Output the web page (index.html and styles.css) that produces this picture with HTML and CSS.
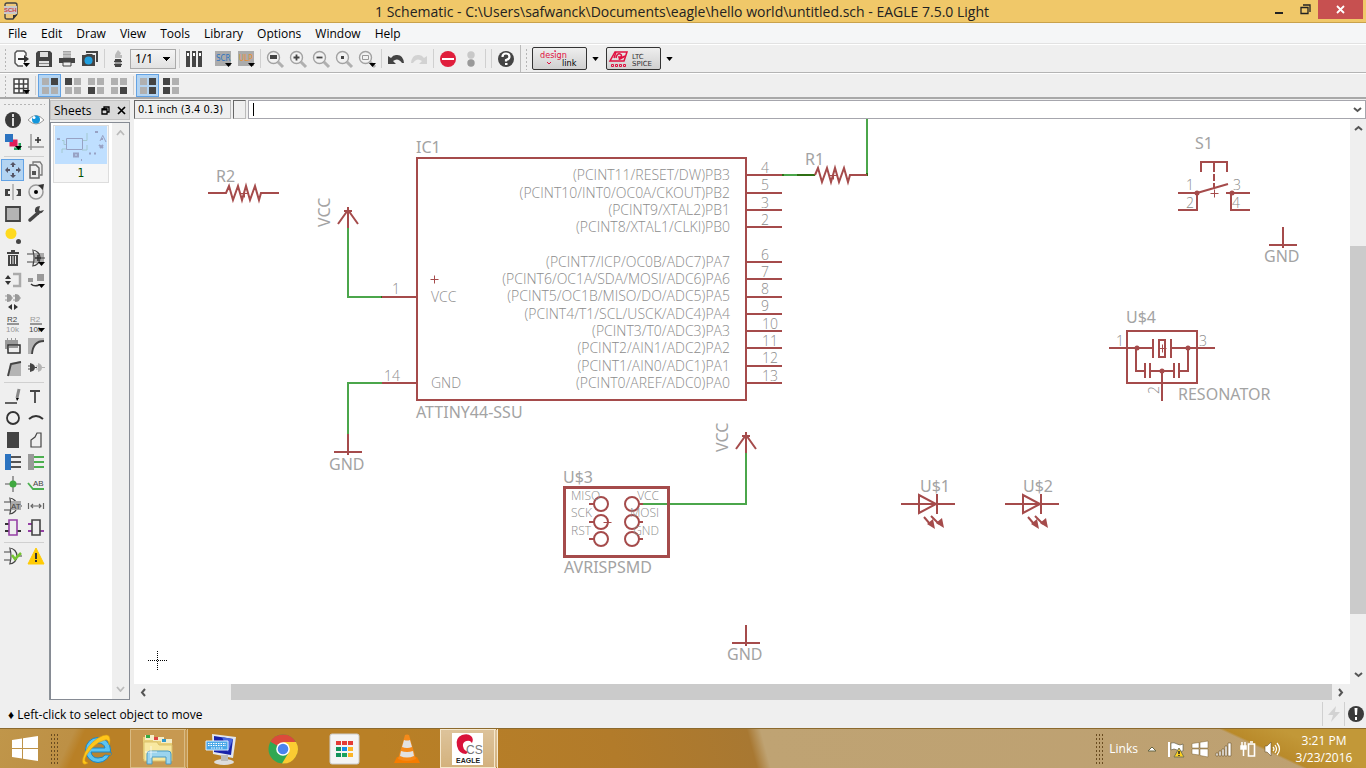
FILE: index.html
```html
<!DOCTYPE html>
<html lang="en">
<head>
<meta charset="utf-8">
<title>1 Schematic - EAGLE 7.5.0 Light</title>
<link rel="stylesheet" href="styles.css">
</head>
<body>
<svg class="defs" aria-hidden="true">
  <defs>
    <symbol id="drop" viewBox="0 0 8 5"><path d="M0 0h8L4 5z"/></symbol>
    <g id="lens"><path d="M13 13l5 5" stroke="#b0b0b0" stroke-width="3"/><circle cx="8.500" cy="8.500" r="6" fill="#f2f2f2" stroke="#a2a2a2" stroke-width="1.400"/></g>
    <g id="gate" fill="none" stroke="#444" stroke-width="1.200"><path d="M6 2c5 0 8 4 8 8s-3 8-8 8M7 3q2 7 0 14M1 6h6M1 14h6M14 10h5"/></g>
    <path id="zig" d="M0 0H18L21-7L25 7L30-7L34 7L38-7L42 7L47-7L51 7L53 0H71"/>
    <path id="plus" d="M-4 0H4M0-4V4"/>
    <g id="led"><path d="M0 0H54M18-9V9L35 0ZM36-10V10"/><path d="M23 13l6 7M30 12l8 8"/><path class="tip" d="M26 20l6-5 2 10zM35 19l6-5 2 10z"/></g>
    <path id="vcc" d="M0 19V0M-10 15L0 1L10 15M-4 2H4M0-2V4"/>
    <path id="gnd" d="M0 0V18M-14 18H14M0 18V21"/>
  </defs>
</svg>

<header class="titlebar">
  <svg class="app-icon" width="14" height="18" viewBox="0 0 14 18"><path d="M3 1h8q2 0 2 2v9l-4 5H3q-2 0-2-2V3q0-2 2-2z" fill="#eec87a" stroke="#444" stroke-width="1.4"/><path d="M9 17v-4h4z" fill="#333"/><path d="M0 4h13v8H0z" fill="#c9c9c9"/><text x="0" y="10" class="t-sch">SCH</text></svg>
  <h1>1 Schematic - C:\Users\safwanck\Documents\eagle\hello world\untitled.sch - EAGLE 7.5.0 Light</h1>
  <div class="winbtns">
    <button aria-label="Minimize"><svg width="10" height="10"><path d="M1 7h8v2H1z" fill="#222"/></svg></button>
    <button aria-label="Restore"><svg width="11" height="11"><path d="M1 3.500h7v6H1zM3 1h7v7" fill="none" stroke="#222" stroke-width="1.300"/></svg></button>
    <button class="close" aria-label="Close"><svg width="9" height="9"><path d="M1 1l7 7M8 1L1 8" stroke="#fff" stroke-width="1.800"/></svg></button>
  </div>
</header>

<nav class="menubar">
  <button>File</button><button>Edit</button><button>Draw</button><button>View</button><button>Tools</button><button>Library</button><button>Options</button><button>Window</button><button>Help</button>
</nav>

<div class="toolbar top">
  <span class="grip"></span>
  <button aria-label="Open"><svg width="20" height="20"><path d="M15 7V4L13 2H6L4 4v10l3 3h5" fill="#fafafa" stroke="#555" stroke-width="1.500"/><path d="M7 9h6V6l5 4-5 4v-3H7z" fill="#333"/><path d="M12 14h7l-3.500 4z"/></svg></button>
  <button aria-label="Save"><svg width="20" height="20"><path d="M2 4l2-2h12l2 2v14H2z" fill="#444"/><path d="M6 3h8v5H6zM5 12h10v5H5z" fill="#e0e0e0"/><path d="M5 14h10v1H5z" fill="#888"/></svg></button>
  <button aria-label="Print"><svg width="20" height="20"><path d="M6 2h8v7H6z" fill="#a5a5a5"/><path d="M6 4h8M6 7h8" stroke="#ddd"/><path d="M2 9h16v5H2z" fill="#444"/><path d="M6 13h8v4H6z" fill="#eee" stroke="#444"/></svg></button>
  <button aria-label="Image export"><svg width="20" height="20"><path d="M6 3h11v10" fill="none" stroke="#444" stroke-width="2"/><path d="M2 6h3l2-1h5l1 1h2v11H2z" fill="#444"/><circle cx="8.500" cy="11.500" r="4" fill="#20a0e0"/></svg></button>
  <span class="sep"></span>
  <button aria-label="Board"><svg width="20" height="20"><path d="M9 1l3 3-1 2h2v3H6V6l1-2z" fill="#bbb"/><path d="M6 10h6v8H6z" fill="#444"/><path d="M5 12.500h8M5 15.500h8" stroke="#444" stroke-width="1.500"/><path d="M5 14h9" stroke="#eee"/></svg></button>
  <select class="page" aria-label="Sheet"><option>1/1</option></select>
  <span class="sep"></span>
  <button aria-label="Use library"><svg width="20" height="20"><path d="M2 2h4v16H2zM8 2h4v16H8zM14 2h4v16h-4z" fill="#444"/><path d="M3 4h2v3H3zM9 4h2v3H9zM15 4h2v3h-2z" fill="#fff"/></svg></button>
  <span class="space"></span>
  <button aria-label="Script"><svg width="20" height="20"><path d="M2 2h16v15H2z" fill="#ababab"/><text x="3" y="12" class="t-scr blue">SCR</text><path d="M12 14h7l-3.500 4z"/></svg></button>
  <button aria-label="Run ULP"><svg width="20" height="20"><path d="M2 2h16v15H2z" fill="#ababab"/><text x="3" y="12" class="t-scr orange">ULP</text><path d="M12 14h7l-3.500 4z"/></svg></button>
  <span class="sep"></span>
  <button aria-label="Zoom fit"><svg width="20" height="20"><use href="#lens"/><path d="M5 6h7v4H5z" fill="#444"/></svg></button>
  <button aria-label="Zoom in"><svg width="20" height="20"><use href="#lens"/><path d="M5.500 8.500h6M8.500 5.500v6" stroke="#444" stroke-width="1.800"/></svg></button>
  <button aria-label="Zoom out"><svg width="20" height="20"><use href="#lens"/><path d="M5.500 8.500h6" stroke="#444" stroke-width="1.800"/></svg></button>
  <button aria-label="Redraw"><svg width="20" height="20"><use href="#lens"/><path d="M7 7h3v3H7z" fill="#444"/></svg></button>
  <button aria-label="Zoom select"><svg width="20" height="20"><use href="#lens"/><path d="M5.500 6.500h6v4h-6z" fill="none" stroke="#999"/><path d="M12 14h7l-3.500 4z"/></svg></button>
  <span class="sep"></span>
  <button aria-label="Undo"><svg width="20" height="20"><path d="M2 7v8h8l-3-3q5-4 9 2h2q-1-9-8-8-3 0-5 3z" fill="#444"/></svg></button>
  <button aria-label="Redo"><svg width="20" height="20"><path d="M18 7v8h-8l3-3q-5-4-9 2H2q1-9 8-8 3 0 5 3z" fill="#d2d2d2"/></svg></button>
  <span class="sep"></span>
  <button aria-label="Stop"><svg width="20" height="20"><circle cx="10" cy="10" r="8" fill="#e01e3c"/><path d="M4 9h12v2H4z" fill="#fff"/></svg></button>
  <button aria-label="Go"><svg width="20" height="20"><circle cx="10" cy="6" r="3.700" fill="#c8c8c8"/><circle cx="10" cy="14" r="3.700" fill="#999"/></svg></button>
  <span class="sep"></span><span class="sep"></span>
  <button aria-label="Help"><svg width="20" height="20"><circle cx="10" cy="10" r="8" fill="#444"/><path d="M6.500 8q0-3.500 3.500-3.500T13.500 8q0 2-3.500 3v1.500" fill="none" stroke="#fff" stroke-width="2.200"/><path d="M9 14h2.500v2H9z" fill="#fff"/></svg></button>
  <span class="edge"></span><span class="grip"></span>
  <button class="brand" aria-label="design link"><svg width="52" height="20"><text x="6" y="9" class="t-design">design</text><text x="28" y="17" class="t-link">link</text><path d="M13 13l2 2 2-2M21 1v2" stroke="#e01040" fill="none"/></svg></button>
  <button class="mini" aria-label="design link menu"><svg width="7" height="4"><use href="#drop"/></svg></button>
  <button class="brand" aria-label="LTC SPICE"><svg width="52" height="20"><path d="M7 3h12l-3 9H2z" fill="none" stroke="#e01040" stroke-width="1.500"/><path d="M8 9q1-5 4-4t0 4 5-2M8 3L6 9M10 8h5" fill="none" stroke="#e01040" stroke-width="1.500"/><path d="M3.500 15.500h2v2h-2zM7.500 15.500h2v2h-2zM11.500 15.500h2v2h-2zM15.500 15.500h2v2h-2z" fill="none" stroke="#e01040"/><text x="24" y="10" class="t-ltc">LTC</text><text x="24" y="17" class="t-ltc">SPICE</text></svg></button>
  <button class="mini" aria-label="SPICE menu"><svg width="7" height="4"><use href="#drop"/></svg></button>
</div>

<div class="toolbar second">
  <span class="grip"></span>
  <button aria-label="Grid"><svg width="20" height="20"><path d="M3 3h14v14H3zM8 3v14M12.500 3v14M3 8h14M3 12.500h14" fill="#fff" stroke="#444" stroke-width="1.500"/><path d="M12 14h7l-3.500 4z"/></svg></button>
  <span class="sep"></span>
  <button class="on" aria-label="Layout 1"><svg width="20" height="20"><path d="M2 2h7v7H2zM2 11h7v7H2zM11 11h7v7h-7z" fill="#b0b0b0"/><path d="M11 2h7v7h-7z" fill="#444"/></svg></button>
  <button aria-label="Layout 2"><svg width="20" height="20"><path d="M11 2h7v7h-7zM2 11h7v7H2zM11 11h7v7h-7z" fill="#b0b0b0"/><path d="M2 2h7v7H2z" fill="#444"/></svg></button>
  <button aria-label="Layout 3"><svg width="20" height="20"><path d="M2 2h7v7H2zM11 2h7v7h-7zM11 11h7v7h-7z" fill="#b0b0b0"/><path d="M2 11h7v7H2z" fill="#444"/></svg></button>
  <button aria-label="Layout 4"><svg width="20" height="20"><path d="M2 2h7v7H2zM11 2h7v7h-7zM2 11h7v7H2z" fill="#b0b0b0"/><path d="M11 11h7v7h-7z" fill="#444"/></svg></button>
  <span class="sep"></span>
  <button class="on" aria-label="Layout 5"><svg width="20" height="20"><path d="M2 2h7v7H2zM2 11h7v7H2z" fill="#b0b0b0"/><path d="M11 2h7v7h-7zM11 11h7v7h-7z" fill="#444"/></svg></button>
  <button aria-label="Layout 6"><svg width="20" height="20"><path d="M11 2h7v7h-7zM11 11h7v7h-7z" fill="#b0b0b0"/><path d="M2 2h7v7H2zM2 11h7v7H2z" fill="#444"/></svg></button>
</div>

<main class="work">
  <aside class="toolbox">
    <span class="grip-h"></span>
    <button aria-label="Info"><svg width="20" height="20"><circle cx="10" cy="10" r="8" fill="#3a3a3a"/><path d="M9 4h2v3H9zM9 8h2v8H9z" fill="#ddd"/></svg></button>
    <button aria-label="Show"><svg width="20" height="20"><path d="M2 10q8-9 16 0-8 8-16 0z" fill="#fff" stroke="#999"/><circle cx="10" cy="9.500" r="4" fill="#1296db"/><circle cx="8" cy="7.500" r="1.500" fill="#fff"/></svg></button>
    <button aria-label="Layers"><svg width="20" height="20"><path d="M11 11h7v7h-7z" fill="#26a35e"/><path d="M6 7h9v8H6z" fill="#e01e5a" stroke="#eee"/><path d="M2 2h8v8H2z" fill="#2b73c0"/><path d="M12 14h7l-3.500 4z"/></svg></button>
    <button aria-label="Mark"><svg width="20" height="20"><path d="M5 2v16M2 15h16" stroke="#999" stroke-width="1.500"/><path d="M9 8h6M12 5v6" stroke="#333" stroke-width="1.600"/></svg></button>
    <span class="rule"></span>
    <button class="on" aria-label="Move"><svg width="20" height="20"><path d="M10 2l3 3h-2v2H9V5H7zM10 18l3-3h-2v-2H9v2H7zM2 10l3-3v2h2v2H5v2zM18 10l-3-3v2h-2v2h2v2z" fill="#556"/></svg></button>
    <button aria-label="Copy"><svg width="20" height="20"><path d="M7 4V2h7l2 3v10h-2" fill="#eee" stroke="#777" stroke-width="1.300"/><path d="M4 5h6l3 3v10H4z" fill="#eee" stroke="#666" stroke-width="1.500"/><path d="M6 11h4v4H6z" fill="#555"/></svg></button>
    <button aria-label="Mirror"><svg width="20" height="20"><path d="M10 2v16" stroke="#aaa" stroke-width="1.500"/><path d="M2 7h5v2H5v3h2v2H2zM18 7h-5l2 2v3l-2 2h5z" fill="#444"/></svg></button>
    <button aria-label="Rotate"><svg width="20" height="20"><circle cx="10" cy="10" r="7" fill="none" stroke="#999" stroke-width="1.500"/><circle cx="10" cy="10" r="2"/><path d="M12 3l6-1-1 6z" fill="#333"/></svg></button>
    <button aria-label="Group"><svg width="20" height="20"><path d="M3 3h14v14H3z" fill="#b4b4b4" stroke="#444" stroke-width="1.800"/></svg></button>
    <button aria-label="Change"><svg width="20" height="20"><path d="M4 16l8-7" stroke="#444" stroke-width="3.500" stroke-linecap="round"/><path d="M18 6l-4 1-1-1 1-4q-6 0-5 6 6 4 9-2z" fill="#444"/></svg></button>
    <button aria-label="Paste"><svg width="20" height="20"><circle cx="8" cy="7.500" r="5.500" fill="#ffda1f"/><circle cx="15.500" cy="15.500" r="2.500" fill="#444"/></svg></button>
    <span></span>
    <button aria-label="Delete"><svg width="20" height="20"><path d="M4 5h12M8 3h4" stroke="#444" stroke-width="1.800"/><path d="M5 7h10v11H5z" fill="#444"/><path d="M7.500 8v8M10 8v8M12.500 8v8" stroke="#eee"/></svg></button>
    <button aria-label="Add"><svg width="20" height="20"><path d="M8 5h10v10H8z" fill="#aaa"/><use href="#gate"/><path d="M9 10h6M12 7v6" stroke="#333" stroke-width="1.600"/><path d="M12 14h7l-3.500 4z"/></svg></button>
    <button aria-label="Pinswap"><svg width="20" height="20"><path d="M10 4h7v12h-7" fill="none" stroke="#aaa" stroke-width="2.500"/><path d="M5 5l3 4H2zM5 15l3-4H2z" fill="#333"/></svg></button>
    <button aria-label="Replace"><svg width="20" height="20"><path d="M2 8h5v4H2zM11 4h7v7h-7z" fill="#999"/><path d="M5 14q3 3 8 1" fill="none" stroke="#333" stroke-width="1.500"/><path d="M12 14h7l-3.500 4z"/></svg></button>
    <button aria-label="Gateswap"><svg width="20" height="20"><path d="M4 2q5 0 5 4t-5 4zM12 2q5 0 5 4t-5 4z" fill="#999"/><path d="M2 4h2M2 8h2M9 6h1M10 4h2M10 8h2M17 6h1" stroke="#999"/><path d="M9 12v6l-4-3zM11 12v6l4-3z" fill="#333"/></svg></button>
    <span></span>
    <button aria-label="Name"><svg width="20" height="20"><text x="4" y="8" class="t-tool">R2</text><path d="M4 10h12" stroke="#777" stroke-width="1.500"/><text x="3" y="18" class="t-tool faint">10k</text></svg></button>
    <button aria-label="Value"><svg width="20" height="20"><text x="4" y="8" class="t-tool faint">R2</text><path d="M4 10h12" stroke="#777" stroke-width="1.500"/><text x="3" y="18" class="t-tool">10k</text><path d="M12 14h7l-3.500 4z"/></svg></button>
    <button aria-label="Smash"><svg width="20" height="20"><path d="M2 4h13v9H2z" fill="#999"/><path d="M4.500 2v12M8.500 2v12M12.500 2v12" stroke="#999"/><path d="M5 9h12v8H5z" fill="#eee" stroke="#333" stroke-width="1.500"/><path d="M6 10h9v2H6z" fill="#999"/></svg></button>
    <button aria-label="Miter"><svg width="20" height="20"><path d="M2 2h16v3Q7 6 6 18H2z" fill="#b4b4b4"/><path d="M18 5Q7 5 6 18" fill="none" stroke="#444" stroke-width="1.800"/></svg></button>
    <button aria-label="Split"><svg width="20" height="20"><path d="M7 5l11-2v15H4z" fill="#b4b4b4"/><path d="M5 18L8 6l10-2" fill="none" stroke="#444" stroke-width="1.800"/></svg></button>
    <button aria-label="Invoke"><svg width="20" height="20"><path d="M4 5q5 1 5 4.500T4 14z" fill="#444"/><path d="M2 8h3M2 11h3M9 9.500h2" stroke="#444"/><path d="M12 5q4 1 4 4.500T12 14z" fill="#b4b4b4"/><path d="M10 8h3M10 11h3M16 9.500h3" stroke="#b4b4b4"/></svg></button>
    <span class="rule"></span>
    <button aria-label="Wire"><svg width="20" height="20"><path d="M2 17h12" stroke="#333" stroke-width="1.500"/><path d="M16 3l-2 9" stroke="#888" stroke-width="3"/><path d="M13 12l1 3 2-3z"/></svg></button>
    <button aria-label="Text"><svg width="20" height="20"><path d="M4 5h10M9 5v12" stroke="#444" stroke-width="1.800"/></svg></button>
    <button aria-label="Circle"><svg width="20" height="20"><circle cx="10" cy="10" r="6" fill="none" stroke="#333" stroke-width="1.800"/></svg></button>
    <button aria-label="Arc"><svg width="20" height="20"><path d="M3 11q7-6 14 0" fill="none" stroke="#333" stroke-width="2"/></svg></button>
    <button aria-label="Rectangle"><svg width="20" height="20"><path d="M4 2h12v16H4z" fill="#444"/></svg></button>
    <button aria-label="Polygon"><svg width="20" height="20"><path d="M5 17v-7l4-3 2-4h4v14z" fill="none" stroke="#444" stroke-width="1.200"/></svg></button>
    <button aria-label="Bus"><svg width="20" height="20"><path d="M2 2h6v16H2z" fill="#2b73c0"/><path d="M8 5h10M8 10h10M8 15h10" stroke="#555" stroke-width="1.800"/></svg></button>
    <button aria-label="Net"><svg width="20" height="20"><path d="M2 2h6v16H2z" fill="#999"/><path d="M8 5h10M8 10h10M8 15h10" stroke="#4cb050" stroke-width="1.800"/></svg></button>
    <button aria-label="Junction"><svg width="20" height="20"><path d="M10 2v16M2 10h16" stroke="#888" stroke-width="1.600"/><circle cx="10" cy="10" r="3.500" fill="#3fa83f"/></svg></button>
    <button aria-label="Label"><svg width="20" height="20"><path d="M2 9l5 6h11" fill="none" stroke="#4cb050" stroke-width="1.800"/><text x="7" y="12" class="t-tool">AB</text></svg></button>
    <button aria-label="Attribute"><svg width="20" height="20"><use href="#gate"/><path d="M8 5h10v9H8z" fill="#aaa"/><text x="8" y="13" class="t-tool">AT</text></svg></button>
    <button aria-label="Dimension"><svg width="20" height="20"><path d="M2.500 7v6M17.500 7v6M5 10h10M7 8l-2 2 2 2M13 8l2 2-2 2" fill="none" stroke="#666" stroke-width="1.200"/></svg></button>
    <button aria-label="Module"><svg width="20" height="20"><path d="M2 6h4M2 13h4M14 13h4" stroke="#333" stroke-width="1.800"/><path d="M6 2h8v15H6z" fill="#eee" stroke="#9540a5" stroke-width="1.600"/></svg></button>
    <button aria-label="Port"><svg width="20" height="20"><path d="M2 6h4M2 13h4M14 13h4" stroke="#9540a5" stroke-width="1.800"/><path d="M6 2h8v15H6z" fill="#eee" stroke="#444" stroke-width="1.600"/></svg></button>
    <span class="rule"></span>
    <button aria-label="ERC"><svg width="20" height="20"><use href="#gate"/><path d="M9 9l3 4 6-6" fill="none" stroke="#75c432" stroke-width="2.500"/></svg></button>
    <button aria-label="Errors"><svg width="20" height="20"><path d="M10 2l8 16H2z" fill="#ffcb05" stroke="#ffcb05" stroke-linejoin="round"/><path d="M9 7h2v6H9zM9 14h2v2H9z" fill="#333"/></svg></button>
  </aside>

  <section class="sheets">
    <div class="sheets-head"><h2>Sheets</h2>
      <button aria-label="Float"><svg width="9" height="9"><path d="M3 3V1h5v5H6M1 3h5v5H1z" fill="none" stroke="#000" stroke-width="1.300"/><path d="M1 3.500h5" stroke="#000" stroke-width="2"/></svg></button>
      <button aria-label="Close sheets"><svg width="9" height="9"><path d="M1 1l7 7M8 1L1 8" stroke="#000" stroke-width="1.700"/></svg></button>
    </div>
    <div class="sheets-list">
      <div class="sheets-items">
        <button class="thumb">
          <svg width="52" height="38" fill="none" stroke="#98a2c4"><path d="M11.500 12.500h16v11h-16z"/><path d="M7 14.500h2v4h2M7 27v-4h4M28 14.500h4V7M32 19v5h-5" stroke="#a3c8cf"/><path d="M2 13h3M19 27.500h4v3h-4zM40 6h3M34 27.500h2M39 27.500h2M26 34h1M44 19l4 3M45 22l3-3M46 13h2" stroke-width="2"/><path d="M48 9l-3 6M48 10l3 6"/></svg>
          <span>1</span>
        </button>
      </div>
      <div class="sheets-scroll"><svg width="9" height="6"><path d="M1 5l3.500-4L8 5" fill="none" stroke="#bbb" stroke-width="1.800"/></svg><svg width="9" height="6"><path d="M1 1l3.500 4L8 1" fill="none" stroke="#bbb" stroke-width="1.800"/></svg></div>
    </div>
  </section>

  <section class="editor">
    <div class="cmdrow">
      <output class="coords">0.1 inch (3.4 0.3)</output>
      <span class="well"></span>
      <div class="combo"><span class="caret"></span><input type="text" aria-label="Command line"><button aria-label="History"><svg width="9" height="6"><path d="M1 1l3.500 3L8 1" fill="none" stroke="#555" stroke-width="2"/></svg></button></div>
    </div>
    <div class="view">
      <svg class="canvas" role="img" aria-label="Schematic">
        <g transform="translate(-134 -119)">
          <g class="net">
            <path d="M348 227V297H382M382 383H348V435M782 175H797M867 119V175M642 504H746V452"/>
            <path class="deep" d="M797 175H815M348 226v2M381 297h2M782 175h2M867 173v3M746 451v2"/>
          </g>
          <g class="sym">
            <path d="M417 158H746V400H417ZM382 297H417M382 383H417"/>
            <path d="M746 175h36M746 193h36M746 210h36M746 227h36M746 262h36M746 279h36M746 297h36M746 314h36M746 331h36M746 348h36M746 366h36M746 383h36"/>
            <use href="#zig" x="208" y="193"/><path d="M815 175L818 168L822 182L827 168L831 182L835 168L839 182L844 168L848 182L850 175H867"/>
            <use href="#vcc" x="348" y="209"/><use href="#vcc" x="746" y="434"/>
            <use href="#gnd" x="348" y="434"/><use href="#gnd" x="746" y="625"/><use href="#gnd" x="1283" y="227"/>
            <use href="#led" x="901" y="504"/><use href="#led" x="1005" y="504"/>
            <path d="M1201 172V162H1227V172M1214 162V172M1214 174v7M1214 183v6M1197 193L1228 184M1178 193H1197V210H1178M1226 193H1250M1231 193V210H1250"/>
            <circle class="solid" cx="1197" cy="193" r="1.500"/><circle class="solid" cx="1232" cy="193" r="1.500"/>
            <path d="M1127 331H1197V383H1127ZM1109 348H1153M1171 348H1215M1153 339V358M1171 339V358M1159 340H1165V357H1159ZM1136 348V371H1145M1145 363V378M1150 363V378M1150 371H1174M1174 363V378M1179 363V378M1179 371H1188V348M1162 371V401"/>
            <circle class="solid" cx="1137" cy="348" r="1.500"/><circle class="solid" cx="1188" cy="348" r="1.500"/><circle class="solid" cx="1162" cy="371" r="1.500"/>
            <path class="thick" d="M564.500 487.500H668.500V556.500H564.500Z"/>
            <circle cx="601" cy="504" r="7"/><circle cx="601" cy="522" r="7"/><circle cx="601" cy="539" r="7"/><circle cx="632" cy="504" r="7"/><circle cx="632" cy="522" r="7"/><circle cx="632" cy="539" r="7"/>
            <path d="M589 504h5M589 522h5M589 539h5M639 504h4M639 522h4M639 539h4"/>
            <g class="thin"><use href="#plus" x="434.500" y="279.500"/><use href="#plus" x="244.500" y="193.500"/><use href="#plus" x="833.500" y="175.500"/><use href="#plus" x="1214.500" y="193.500"/><use href="#plus" x="1162.500" y="348.500"/><use href="#plus" x="607.500" y="522.500"/></g>
          </g>
          <g class="name">
            <text x="416" y="153">IC1</text><text x="216" y="182">R2</text><text x="805" y="165">R1</text><text x="1195" y="149">S1</text>
            <text x="1126" y="323">U$4</text><text x="1178" y="400">RESONATOR</text><text x="563" y="483">U$3</text><text x="564" y="573">AVRISPSMD</text>
            <text x="416" y="418">ATTINY44-SSU</text><text x="920" y="492">U$1</text><text x="1023" y="492">U$2</text>
            <text x="329" y="470">GND</text><text x="727" y="660">GND</text><text x="1264" y="262">GND</text>
            <text transform="translate(330 227) rotate(-90)">VCC</text><text transform="translate(728 452) rotate(-90)">VCC</text>
          </g>
          <g class="pin end">
            <text x="730" y="180">(PCINT11/RESET/DW)PB3</text><text x="730" y="198">(PCINT10/INT0/OC0A/CKOUT)PB2</text><text x="730" y="215">(PCINT9/XTAL2)PB1</text><text x="730" y="232">(PCINT8/XTAL1/CLKI)PB0</text>
            <text x="730" y="267">(PCINT7/ICP/OC0B/ADC7)PA7</text><text x="730" y="284">(PCINT6/OC1A/SDA/MOSI/ADC6)PA6</text><text x="730" y="301">(PCINT5/OC1B/MISO/DO/ADC5)PA5</text><text x="730" y="319">(PCINT4/T1/SCL/USCK/ADC4)PA4</text>
            <text x="730" y="336">(PCINT3/T0/ADC3)PA3</text><text x="730" y="353">(PCINT2/AIN1/ADC2)PA2</text><text x="730" y="371">(PCINT1/AIN0/ADC1)PA1</text><text x="730" y="388">(PCINT0/AREF/ADC0)PA0</text>
          </g>
          <g class="pin">
            <text x="431" y="302">VCC</text><text x="431" y="388">GND</text>
            <text x="392" y="294">1</text><text x="384" y="381">14</text>
            <text x="761" y="173">4</text><text x="761" y="190">5</text><text x="761" y="208">3</text><text x="761" y="225">2</text><text x="761" y="260">6</text><text x="761" y="277">7</text><text x="761" y="294">8</text><text x="761" y="311">9</text>
            <text x="762" y="329">10</text><text x="762" y="346">11</text><text x="762" y="363">12</text><text x="762" y="381">13</text>
            <text x="1186" y="190">1</text><text x="1233" y="190">3</text><text x="1186" y="208">2</text><text x="1232" y="208">4</text>
            <text x="1116" y="346">1</text><text x="1199" y="346">3</text><text transform="translate(1159 394) rotate(-90)">2</text>
          </g>
          <g class="pad">
            <text x="571" y="500">MISO</text><text x="571" y="517">SCK</text><text x="571" y="535">RST</text>
            <g class="end"><text x="659" y="500">VCC</text><text x="659" y="517">MOSI</text><text x="659" y="535">GND</text></g>
          </g>
          <path class="cross" d="M148 660.500H167M157.500 651V670"/>
        </g>
      </svg>
      <div class="vbar"><button aria-label="Scroll up"><svg width="9" height="6"><path d="M1 5l3.500-3L8 5" fill="none" stroke="#555" stroke-width="2"/></svg></button><span class="pre"></span><span class="knob"></span><span class="post"></span><button aria-label="Scroll down"><svg width="9" height="6"><path d="M1 1l3.500 3L8 1" fill="none" stroke="#555" stroke-width="2"/></svg></button></div>
      <div class="hbar"><button aria-label="Scroll left"><svg width="6" height="9"><path d="M5 1L2 4.500 5 8" fill="none" stroke="#555" stroke-width="2"/></svg></button><span class="pre"></span><span class="knob"></span><button aria-label="Scroll right"><svg width="6" height="9"><path d="M1 1l3 3.500L1 8" fill="none" stroke="#555" stroke-width="2"/></svg></button></div>
    </div>
  </section>
</main>

<div class="status">
  <p>♦ Left-click to select object to move</p>
  <span class="cell"><svg width="14" height="18"><path d="M9 1L1 10h5l-2 7 9-10H8z" fill="#d2d2d2"/></svg></span>
  <span class="cell"><svg width="18" height="18"><circle cx="9" cy="9" r="8" fill="#3a3a3a"/><path d="M7.500 3h3l-.5 7H8zM8 12h2v3H8z" fill="#fff"/></svg></span>
</div>

<footer class="taskbar">
  <button class="start" aria-label="Start"><svg width="28" height="28"><path d="M1 5l10-1.500V13H1zM12 3.300L27 1v12H12zM1 14h10v9.500L1 22zM12 14h15v12l-15-2.300z" fill="#fff"/></svg></button>
  <span class="dots"></span>
  <nav class="apps">
    <button aria-label="Internet Explorer"><svg width="34" height="34"><circle cx="18" cy="18" r="12.500" fill="#5cc4f2" stroke="#1a86c6"/><path d="M11 16q1-5 7-5t7 5z" fill="#b98430" stroke="#1a86c6"/><path d="M11 20h20v3h-6q-2 3-7 3-6 0-7-6z" fill="#b98430" stroke="#1a86c6"/><path d="M26 23h5v-2z" fill="#b98430"/><path d="M8 31q-7 4-5-5Q6 14 18 6q12-7 12 2 0 3-1 5 0-6-4-5-6 1-13 8Q4 25 5 29q1 1 3 2z" fill="#ffc61a" stroke="#d99a10" stroke-width=".6"/></svg></button>
    <button class="open" aria-label="File Explorer"><svg width="34" height="34"><path d="M2 5h12l2 3h15v19H2z" fill="#e8cf76"/><path d="M4 3h9v5H4z" fill="#f5edc8"/><path d="M5 3h4v3H5z" fill="#3a4"/><path d="M12 5h11v4H12z" fill="#f5edc8"/><path d="M13 5h4v3h-4z" fill="#d44"/><path d="M20 7h11v4H20z" fill="#f5edc8"/><path d="M21 7h4v3h-4z" fill="#39c"/><path d="M3 10h13l2 3h13v16H3z" fill="#f8e8a0" stroke="#dbc16b"/><path d="M6 32V22q0-3 3-3h18q3 0 3 3v10h-5v-7H11v7z" fill="#9bd4ee" stroke="#4a9ac0"/><path d="M10 14v12M4 20h12" stroke="#fff" stroke-width=".7"/></svg></button>
    <button aria-label="On-screen keyboard"><svg width="34" height="34"><path d="M8 2l24 3-3 21-20-4z" fill="#e2e6ed"/><path d="M10 4l19 3-2 16-17-3z" fill="#1722aa"/><path d="M18 5l11 2-5 13z" fill="#4a68e0"/><ellipse cx="20" cy="30" rx="10" ry="3" fill="#ddd"/><path d="M17 23h7v6h-7z" fill="#bbb"/><path d="M2 9h22v9H2z" fill="#4aa8e8" stroke="#def"/><path d="M4 11.500h18M4 13.500h18M7 16h12" stroke="#fff" stroke-width="1.200" stroke-dasharray="1.500 1"/></svg></button>
    <button aria-label="Chrome"><svg width="34" height="34"><circle cx="17" cy="17" r="14.500" fill="#30a853"/><path d="M17 17L4.500 9.700A14.500 14.500 0 0 1 30 10.500z" fill="#dc4a3b"/><path d="M17 10h13A14.500 14.500 0 0 1 16 31.500L23 20z" fill="#fbcc32"/><circle cx="17" cy="17" r="6.800" fill="#fff"/><circle cx="17" cy="17" r="5.300" fill="#4a84ee"/></svg></button>
    <button aria-label="App launcher"><svg width="34" height="34"><rect x="2" y="2" width="29" height="30" rx="2" fill="#f4f4f4" stroke="#ccc"/><path d="M8 9h5v4H8zM14 9h5v4h-5zM20 9h5v4h-5z" fill="#e43b36"/><path d="M8 15h5v4H8zM8 21h5v4H8z" fill="#11925a"/><path d="M14 15h5v4h-5z" fill="#168de8"/><path d="M14 21h5v4h-5z" fill="#1aa260"/><path d="M20 15h5v4h-5zM20 21h5v4h-5z" fill="#fbb427"/></svg></button>
    <button aria-label="VLC"><svg width="34" height="34"><path d="M7 25h20l3 6H4z" fill="#f57c00"/><path d="M15 3q2-1 4 0l7 24q-9 4-18 0z" fill="#f58a1a"/><path d="M14 8q3 1 6 0l2 7q-5 2-10 0zM11 19q6 2 12 0l1 5q-7 3-14 0z" fill="#e2e2e2"/></svg></button>
    <button class="open active" aria-label="EAGLE"><svg width="32" height="34"><path d="M0 1h31v32H0z" fill="#fff"/><path d="M19 4Q16 1 10 3 3 6 5 14q2 8 9 8l2-2q-6-3-5-8 2-4 7-3l2 2q2-4-1-7z" fill="#d9133b"/><text x="14" y="22" class="t-cs">CS</text><text x="4" y="31" class="t-eagle">EAGLE</text></svg></button>
  </nav>
  <div class="tray">
    <span class="dots"></span>
    <a href="#links">Links</a>
    <button aria-label="Show hidden icons"><svg width="10" height="6"><path d="M1 5l4-4 4 4z" fill="#fff" stroke="#664"/></svg></button>
    <button aria-label="Action center"><svg width="18" height="18"><path d="M2 2v15" stroke="#fff" stroke-width="2"/><path d="M4 3q3-1 6 1t6 0v7q-3 1-6-1t-6 0z" fill="#fff" stroke="#554" stroke-width=".6"/><path d="M12 8l5 9H7z" fill="#ffd21f" stroke="#775"/><path d="M12 11v3M12 15v1" stroke="#222" stroke-width="1.500"/></svg></button>
    <button aria-label="Windows"><svg width="18" height="18"><path d="M1 3.500l7-1V8H1zM9 2.300L17 1v7H9zM1 9h7v6l-7-1zM9 9h8v8l-8-1.500z" fill="#fff" stroke="#7a6030" stroke-width=".5"/></svg></button>
    <button aria-label="Network"><svg width="18" height="18"><path d="M1 13h2v3H1zM4 11h2v5H4zM7 9h2v7H7zM10 6h2v10h-2zM13 3h3v13h-3z" fill="#fff" stroke="#6b5530" stroke-width=".6"/></svg></button>
    <button aria-label="Battery"><svg width="18" height="18"><path d="M3 2v4M6 2v4M2 6h5v3H2zM4.500 9v7" stroke="#fff" fill="#fff" stroke-width="1.500"/><path d="M9.500 4h6v12h-6zM11 2h3" fill="none" stroke="#fff" stroke-width="1.600"/></svg></button>
    <button aria-label="Volume"><svg width="18" height="18"><path d="M2 6h2l4-4v14l-4-4H2z" fill="#fff" stroke="#6b5530" stroke-width=".6"/><path d="M10 7q2 2 0 4M12 5q3 4 0 8M14 3q5 6 0 12" fill="none" stroke="#fff" stroke-width="1.200"/></svg></button>
    <time><span>3:21 PM</span><span>3/23/2016</span></time>
  </div>
</footer>
</body>
</html>
```
FILE: styles.css
```css
* { box-sizing: border-box; }
body {
  margin: 0;
  height: 100vh;
  display: flex;
  flex-direction: column;
  overflow: hidden;
  background: #efefef;
  color: #000;
  font: 12px/16px "Open Sans", "Noto Sans", sans-serif;
}
button { border: 0; padding: 0; background: none; font: inherit; color: inherit; display: flex; align-items: center; justify-content: center; }
svg { display: block; flex: none; }
h1, h2, p { margin: 0; font-weight: 400; }
.defs { position: absolute; width: 0; height: 0; }

.titlebar { display: flex; align-items: flex-start; height: 23px; flex: none; background: #f0c869; border-bottom: 1px solid #c9a24c; padding-left: 4px; }
.app-icon { margin: 2px 0 0; }
.titlebar h1 { flex: 1; text-align: center; font-size: 14px; line-height: 23px; color: #222; padding-left: 80px; white-space: nowrap; }
.winbtns { display: flex; padding-right: 3px; }
.winbtns button { width: 26px; height: 19px; }
.winbtns .close { width: 45px; background: #c75050; }
.t-sch { font: 700 6px "Liberation Sans", sans-serif; fill: #d04444; }

.menubar { display: flex; height: 21px; flex: none; background: #f5f6f7; border-bottom: 1px solid #e2e2e2; padding: 2px 0 0 1px; }
.menubar button { padding: 0 7px; }

.toolbar { display: flex; align-items: center; height: 29px; flex: none; border-bottom: 1px solid #b4b4b4; border-top: 1px solid #fff; }
.toolbar.second { height: 26px; border-bottom: 2px solid #a8a8a8; }
.toolbar button { width: 23px; height: 23px; }
.grip { width: 3px; height: 22px; margin: 0 2px 0 4px; background: radial-gradient(circle, #b5b5b5 1px, transparent 1px) 0 0 / 3px 4px; }
.sep { width: 6px; height: 19px; background: linear-gradient(#d0d0d0, #d0d0d0) center / 1px 100% no-repeat; }
.space { width: 6px; }
.edge { width: 1px; height: 27px; background: #bbb; margin-left: 3px; }
.toolbar .on, .toolbox .on { background: #b3d4f2; border: 1px solid #62a2e4; }
.page {
  width: 46px;
  height: 20px;
  appearance: none;
  border: 1px solid #aaa;
  border-radius: 0;
  padding: 0 0 0 4px;
  color: #000;
  font: 12px "Noto Sans", sans-serif;
  background:
    linear-gradient(to bottom left, #000 50%, transparent 50%) 32px 7px / 4px 4px no-repeat,
    linear-gradient(to bottom right, #000 50%, transparent 50%) 36px 7px / 4px 4px no-repeat,
    linear-gradient(#f4f4f4, #e2e2e2);
}
.toolbar .brand { width: 55px; height: 23px; border: 1px solid #333; border-radius: 2px; background: linear-gradient(#eee, #d0d0d0); margin-left: 2px; }
.toolbar .mini { width: 17px; }
.t-tool { font: 8px "Liberation Sans", sans-serif; fill: #444; }
.t-scr { font: 8px "DejaVu Sans Condensed", sans-serif; }
.blue { fill: #2b73c0; }
.orange { fill: #e89030; }
.faint { fill: #999; }
.t-design { font: 9px "DejaVu Sans Condensed", sans-serif; fill: #e01040; }
.t-link { font: 9px "DejaVu Sans Condensed", sans-serif; fill: #000; }
.t-ltc { font: 7px "DejaVu Sans", sans-serif; fill: #333; }

.work { flex: 1; display: flex; min-height: 0; }
.toolbox { width: 50px; flex: none; display: grid; grid-template-columns: 23px 23px; grid-template-rows: 10px 22px 22px 6px repeat(10, 22px) 6px repeat(7, 22px) 6px 22px; align-content: start; padding-left: 1px; border-right: 1px solid #8c9299; }
.grip-h { grid-column: 1 / -1; margin: 4px 2px; background: radial-gradient(circle, #b5b5b5 1px, transparent 1px) 0 0 / 4px 3px; }
.rule { grid-column: 1 / -1; background: linear-gradient(#d0d0d0, #d0d0d0) center / 40px 1px no-repeat; }

.sheets { width: 80px; flex: none; display: flex; flex-direction: column; padding-top: 1px; gap: 2px; }
.sheets-head { display: flex; align-items: center; height: 20px; background: #d9d9d9; border: 1px solid #c2c2c2; padding: 1px 0 0 3px; }
.sheets-head h2 { flex: 1; font-size: 12px; }
.sheets-head button { width: 16px; height: 16px; }
.sheets-list { flex: 1; display: flex; background: #fff; border: 1px solid #868b94; }
.sheets-items { flex: 1; padding: 2px; }
.thumb { flex-direction: column; width: 56px; height: 58px; border: 1px solid #ddd; background: #f6f6f6; font: 12px/18px "DejaVu Sans Condensed", sans-serif; color: #005000; }
.thumb svg { background: #bfdfff; }
.sheets-scroll { width: 17px; background: #efefef; display: flex; flex-direction: column; justify-content: space-between; align-items: center; padding: 7px 0 7px; }

.editor { flex: 1; display: flex; flex-direction: column; min-width: 0; padding-left: 4px; }
.cmdrow { display: flex; height: 20px; flex: none; gap: 2px; padding-top: 1px; }
.coords { width: 97px; border: 1px solid; border-color: #666 #bbb #bbb #666; padding-left: 3px; font: 11px/18px "DejaVu Sans Condensed", "Noto Sans", sans-serif; white-space: nowrap; }
.well { width: 13px; border: 1px solid; border-color: #666 #bbb #bbb #666; }
.combo { flex: 1; display: flex; align-items: center; background: #fff; border: 1px solid #a6a6ad; padding-left: 4px; }
.combo input { flex: 1; min-width: 0; border: 0; padding: 0; background: none; outline: 0; font: inherit; }
.combo button { width: 16px; height: 16px; }
.caret { width: 1px; height: 13px; background: #000; }
.view { flex: 1; display: grid; grid-template: minmax(0, 1fr) 16px / minmax(0, 1fr) 16px; min-height: 0; }
.canvas { width: 100%; height: 100%; background: #fff; }
.vbar { display: flex; flex-direction: column; }
.hbar { display: flex; }
.vbar button { height: 18px; }
.hbar button { width: 18px; }
.knob { background: #cbcbcb; }
.vbar .pre { flex: 109; }
.vbar .knob { flex: 368; }
.vbar .post { flex: 52; }
.hbar .pre { flex: 79; }
.hbar .knob { flex: 1101; }

.net { fill: none; stroke: #4ba64b; stroke-width: 2; }
.net .deep { stroke: #2f6f14; }
.sym { fill: none; stroke: #a54b4b; stroke-width: 2; }
.solid { fill: #a54b4b; }
.tip { fill: #a54b4b; stroke: none; }
.thick { stroke-width: 3; }
.thin { stroke-width: 1; }
.name { font: 16px "Noto Sans", sans-serif; fill: #a3a3a3; }
.pin { font: 300 14px "Open Sans", "Noto Sans", sans-serif; fill: #8c8c8c; }
.pad { font: 300 12px "Open Sans", "Noto Sans", sans-serif; fill: #8c8c8c; }
.end { text-anchor: end; }
.cross { stroke: #000; stroke-dasharray: 1 1; }

.status { display: flex; align-items: center; height: 28px; flex: none; background: #efefef; }
.status p { flex: 1; padding: 2px 0 0 8px; }
.cell { display: flex; align-items: center; justify-content: center; width: 22px; height: 24px; border-left: 1px solid #d0d0d0; }

.taskbar {
  display: flex;
  align-items: center;
  height: 40px;
  flex: none;
  border-top: 1px solid #8c6a2e;
  color: #fff;
  background:
    linear-gradient(115deg, #c0964a 0, #bd9045 68px, transparent 78px),
    linear-gradient(25deg, transparent 48%, #b98a2a 50%, #c29838 70%) right / 200px 100% no-repeat,
    linear-gradient(75deg, #b98026 0, #b98026 28%, #b27b2a 45%, #a87832 55%, #bfa373 56%, #bda071 100%);
}
.start { width: 50px; height: 39px; }
.dots { width: 9px; height: 31px; background: radial-gradient(circle, #6a4c20 1px, transparent 1px) 0 0 / 3px 4px; }
.apps { display: flex; padding-left: 7px; }
.apps button { width: 62px; height: 39px; }
.apps .open { width: 58px; margin: 0 2px; border: 1px solid #d9bb84; background: linear-gradient(#fff3, #fff3); border-right: 4px double #d9bb84; }
.apps .active { background: linear-gradient(#fff8, #fff6); border-color: #f5e7cc; }
.t-cs { font: 12px "Liberation Sans", sans-serif; fill: #777; }
.t-eagle { font: 700 7px "Liberation Sans", sans-serif; fill: #222; }
.tray { margin-left: auto; display: flex; align-items: center; }
.tray a { color: #fff; text-decoration: none; padding: 0 2px 0 5px; }
.tray button { width: 24px; height: 30px; }
.tray time { display: flex; flex-direction: column; width: 82px; padding-right: 2px; text-align: center; line-height: 17px; }
```
